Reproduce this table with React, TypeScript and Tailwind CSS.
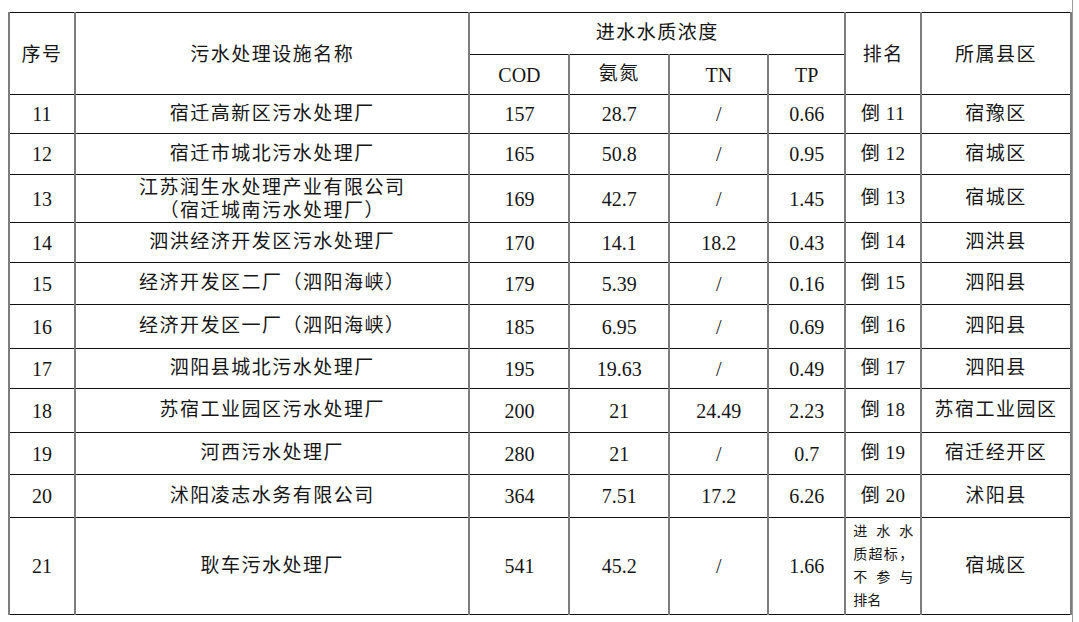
import React from "react";

type Row = {
  no: string;
  name: React.ReactNode;
  cod: string;
  nh: string;
  tn: string;
  tp: string;
  rank: React.ReactNode;
  area: string;
  h: string;
};

const cell =
  "border-x-2 border-y border-x-[#7d7d7d] border-y-[#111] text-center align-middle p-0";

const rows: Row[] = [
  { no: "11", name: "宿迁高新区污水处理厂", cod: "157", nh: "28.7", tn: "/", tp: "0.66", rank: "倒 11", area: "宿豫区", h: "h-[39px]" },
  { no: "12", name: "宿迁市城北污水处理厂", cod: "165", nh: "50.8", tn: "/", tp: "0.95", rank: "倒 12", area: "宿城区", h: "h-[41px]" },
  {
    no: "13",
    name: (
      <div className="leading-[23px]">
        <div>江苏润生水处理产业有限公司</div>
        <div>（宿迁城南污水处理厂）</div>
      </div>
    ),
    cod: "169", nh: "42.7", tn: "/", tp: "1.45", rank: "倒 13", area: "宿城区", h: "h-[48px]",
  },
  { no: "14", name: "泗洪经济开发区污水处理厂", cod: "170", nh: "14.1", tn: "18.2", tp: "0.43", rank: "倒 14", area: "泗洪县", h: "h-[40px]" },
  { no: "15", name: "经济开发区二厂（泗阳海峡）", cod: "179", nh: "5.39", tn: "/", tp: "0.16", rank: "倒 15", area: "泗阳县", h: "h-[42px]" },
  { no: "16", name: "经济开发区一厂（泗阳海峡）", cod: "185", nh: "6.95", tn: "/", tp: "0.69", rank: "倒 16", area: "泗阳县", h: "h-[44px]" },
  { no: "17", name: "泗阳县城北污水处理厂", cod: "195", nh: "19.63", tn: "/", tp: "0.49", rank: "倒 17", area: "泗阳县", h: "h-[40px]" },
  { no: "18", name: "苏宿工业园区污水处理厂", cod: "200", nh: "21", tn: "24.49", tp: "2.23", rank: "倒 18", area: "苏宿工业园区", h: "h-[44px]" },
  { no: "19", name: "河西污水处理厂", cod: "280", nh: "21", tn: "/", tp: "0.7", rank: "倒 19", area: "宿迁经开区", h: "h-[42px]" },
  { no: "20", name: "沭阳凌志水务有限公司", cod: "364", nh: "7.51", tn: "17.2", tp: "6.26", rank: "倒 20", area: "沭阳县", h: "h-[43px]" },
  {
    no: "21",
    name: "耿车污水处理厂",
    cod: "541", nh: "45.2", tn: "/", tp: "1.66",
    rank: (
      <div className="mx-auto w-[60px] text-[14px] leading-[23px] tracking-normal">
        <div className="flex justify-between"><span>进</span><span>水</span><span>水</span></div>
        <div className="flex justify-between"><span>质</span><span>超</span><span>标</span><span>，</span></div>
        <div className="flex justify-between"><span>不</span><span>参</span><span>与</span></div>
        <div className="text-left">排名</div>
      </div>
    ),
    area: "宿城区", h: "h-[97px]",
  },
];

export default function App() {
  return (
    <div
      className="h-[622px] w-[1073px] border-r border-r-[#9a9a9a] bg-white pl-[8px] pt-[12px] text-[#161616]"
      style={{ fontFamily: '"Liberation Serif", "Noto Sans CJK SC", serif' }}
    >
      <table className="table-fixed border-collapse">
        <colgroup>
          <col className="w-[66px]" />
          <col className="w-[395px]" />
          <col className="w-[100px]" />
          <col className="w-[100px]" />
          <col className="w-[99px]" />
          <col className="w-[77px]" />
          <col className="w-[76px]" />
          <col className="w-[150px]" />
        </colgroup>
        <thead>
          <tr className="h-[42px] text-[19px] tracking-[1.5px]">
            <th rowSpan={2} className={`${cell} pt-[4px] font-normal`}>序号</th>
            <th rowSpan={2} className={`${cell} pt-[4px] font-normal`}>污水处理设施名称</th>
            <th colSpan={4} className={`${cell} font-normal`}>进水水质浓度</th>
            <th rowSpan={2} className={`${cell} pt-[4px] font-normal`}>排名</th>
            <th rowSpan={2} className={`${cell} pt-[4px] font-normal`}>所属县区</th>
          </tr>
          <tr className="h-[40px] text-[20px]">
            <th className={`${cell} font-normal`}>COD</th>
            <th className={`${cell} font-normal text-[19px] tracking-[1.5px]`}>氨氮</th>
            <th className={`${cell} font-normal`}>TN</th>
            <th className={`${cell} font-normal`}>TP</th>
          </tr>
        </thead>
        <tbody>
          {rows.map((r) => (
            <tr key={r.no} className={r.h}>
              <td className={`${cell} text-[20px]`}>{r.no}</td>
              <td className={`${cell} text-[19px] tracking-[1.5px]`}>{r.name}</td>
              <td className={`${cell} text-[20px]`}>{r.cod}</td>
              <td className={`${cell} text-[20px]`}>{r.nh}</td>
              <td className={`${cell} text-[20px]`}>{r.tn}</td>
              <td className={`${cell} text-[20px]`}>{r.tp}</td>
              <td className={`${cell} text-[19px] tracking-[0.5px]`}>{r.rank}</td>
              <td className={`${cell} text-[19px] tracking-[1.5px]`}>{r.area}</td>
            </tr>
          ))}
        </tbody>
      </table>
    </div>
  );
}
